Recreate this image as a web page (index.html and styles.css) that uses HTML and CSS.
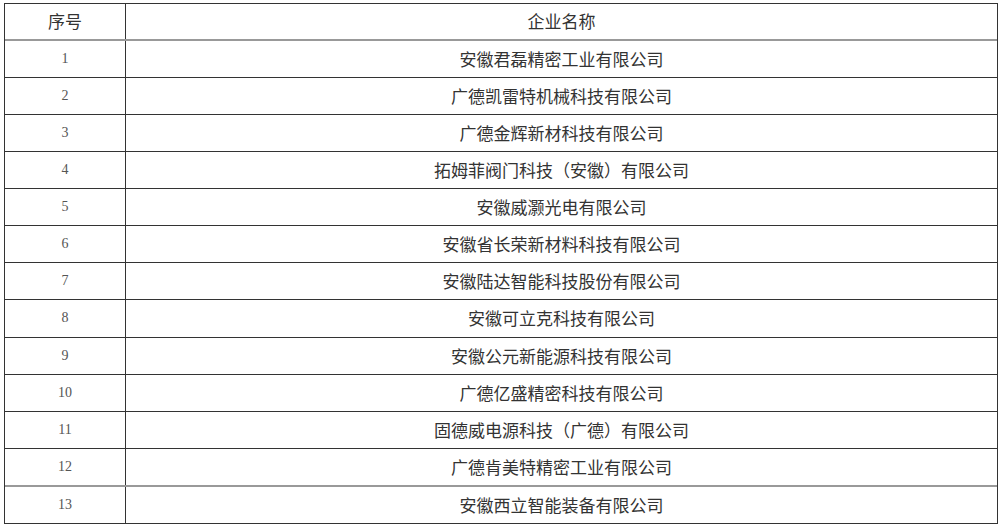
FILE: index.html
```html
<!DOCTYPE html>
<html lang="zh-CN">
<head>
<meta charset="utf-8">
<link rel="stylesheet" href="styles.css">
</head>
<body>
<div class="table">
  <div class="row head"><div class="no">序号</div><div class="name">企业名称</div></div>
  <div class="row tall"><div class="no">1</div><div class="name">安徽君磊精密工业有限公司</div></div>
  <div class="row"><div class="no">2</div><div class="name">广德凯雷特机械科技有限公司</div></div>
  <div class="row"><div class="no">3</div><div class="name">广德金辉新材科技有限公司</div></div>
  <div class="row"><div class="no">4</div><div class="name">拓姆菲阀门科技（安徽）有限公司</div></div>
  <div class="row"><div class="no">5</div><div class="name">安徽威灏光电有限公司</div></div>
  <div class="row"><div class="no">6</div><div class="name">安徽省长荣新材料科技有限公司</div></div>
  <div class="row"><div class="no">7</div><div class="name">安徽陆达智能科技股份有限公司</div></div>
  <div class="row tall"><div class="no">8</div><div class="name">安徽可立克科技有限公司</div></div>
  <div class="row"><div class="no">9</div><div class="name">安徽公元新能源科技有限公司</div></div>
  <div class="row"><div class="no">10</div><div class="name">广德亿盛精密科技有限公司</div></div>
  <div class="row"><div class="no">11</div><div class="name">固德威电源科技（广德）有限公司</div></div>
  <div class="row tall gray"><div class="no">12</div><div class="name">广德肯美特精密工业有限公司</div></div>
  <div class="row last"><div class="no">13</div><div class="name">安徽西立智能装备有限公司</div></div>
</div>
</body>
</html>
```
FILE: styles.css
```css
html, body {
  margin: 0;
  padding: 0;
  background: #fff;
}
body {
  padding: 3px 0 0 4px;
}
.table {
  width: 994px;
  box-sizing: border-box;
  border: 1px solid #333;
  font-family: "Noto Sans CJK SC", "Noto Sans", sans-serif;
  color: #333;
}
.row {
  display: grid;
  grid-template-columns: 121px 1fr;
  height: 37px;
  box-sizing: border-box;
  border-bottom: 1px solid #333;
}
.row.tall { height: 38px; }
.row.head {
  height: 37px;
  border-bottom: 2px solid #999;
}
.row.head + .row { height: 37px; }
.row.gray { border-bottom: 2px solid #999; }
.row.last { border-bottom: none; height: 36px; }
.no, .name {
  display: flex;
  align-items: center;
  justify-content: center;
}
.no {
  border-right: 1px solid #333;
  font-family: "Liberation Serif", "DejaVu Serif", serif;
  font-size: 14px;
  color: #555;
  padding-bottom: 1px;
}
.name {
  font-size: 17px;
  padding-bottom: 2px;
}
.head .no {
  font-family: "Noto Sans CJK SC", sans-serif;
  font-size: 17px;
  color: #333;
  padding-bottom: 2px;
}
```
